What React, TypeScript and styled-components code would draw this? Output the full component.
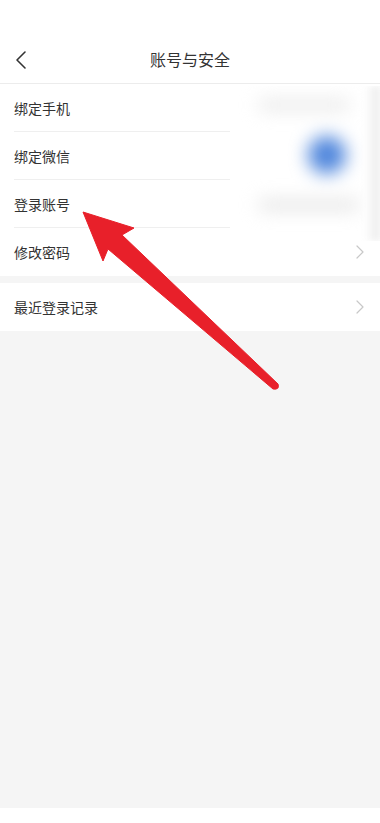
import { FC } from "react"
import styled, { createGlobalStyle } from "styled-components"

const GlobalStyle = createGlobalStyle`
  html, body {
    margin: 0;
    padding: 0;
    background: #fff;
  }
  * {
    box-sizing: border-box;
  }
`

const Chevron: FC = () => (
  <svg width="8" height="14" viewBox="0 0 8 14">
    <path d="M1 1 L7 7 L1 13" fill="none" stroke="#c8c8c8" strokeWidth="1.2" strokeLinecap="round" strokeLinejoin="round" />
  </svg>
)

const BackIcon: FC = () => (
  <svg width="14" height="20" viewBox="0 0 14 20">
    <path d="M11 2 L3 10 L11 18" fill="none" stroke="#333" strokeWidth="1.6" strokeLinecap="round" strokeLinejoin="round" />
  </svg>
)

const Arrow: FC = () => (
  <ArrowSvg width="380" height="823" viewBox="0 0 380 823">
    <path
      d="M83 212 L134 228 L122 235 L278 384 Q280 390 273 389 L108 249 L103 261 Z"
      fill="#e8202a"
      stroke="#e8202a"
      strokeWidth="1"
      strokeLinejoin="round"
    />
  </ArrowSvg>
)

const App: FC = () => {
  return (
    <>
      <GlobalStyle />
      <Page>
        <StatusSpace />
        <NavBar>
          <BackButton>
            <BackIcon />
          </BackButton>
          <Title>账号与安全</Title>
        </NavBar>
        <Group>
          <Row>
            <Label>绑定手机</Label>
          </Row>
          <Row>
            <Label>绑定微信</Label>
          </Row>
          <Row>
            <Label>登录账号</Label>
          </Row>
          <Row last>
            <Label>修改密码</Label>
            <Chevron />
          </Row>
        </Group>
        <Group>
          <Row last>
            <Label>最近登录记录</Label>
            <Chevron />
          </Row>
        </Group>
        <Filler />
        <BottomBar />
        <Blur>
          <BlurInner>
            <TextSmudge />
            <Avatar />
            <TextSmudge wide />
          </BlurInner>
          <EdgeShade />
        </Blur>
        <Arrow />
      </Page>
    </>
  )
}

const Page = styled.div`
  position: relative;
  width: 380px;
  height: 823px;
  display: flex;
  flex-direction: column;
  background: #f5f5f5;
  font-family: "Noto Sans CJK SC", "Noto Sans", sans-serif;
  overflow: hidden;
`

const StatusSpace = styled.div`
  height: 36px;
  background: #fff;
`

const NavBar = styled.div`
  position: relative;
  height: 48px;
  background: #fff;
  display: flex;
  align-items: center;
  justify-content: center;
  border-bottom: 1px solid #ececec;
`

const BackButton = styled.div`
  position: absolute;
  left: 14px;
  top: 14px;
  display: flex;
`

const Title = styled.div`
  font-size: 16px;
  color: #333;
  margin-top: -2px;
`

const Group = styled.div`
  background: #fff;
  margin-bottom: 7px;
  padding-left: 14px;
`

const Row = styled.div<{ last?: boolean }>`
  height: 48px;
  display: flex;
  align-items: center;
  justify-content: space-between;
  padding-right: 16px;
  border-bottom: ${({ last }) => (last ? "none" : "1px solid #efefef")};
`

const Label = styled.div`
  font-size: 14px;
  color: #333;
`

const Filler = styled.div`
  flex: 1;
`

const BottomBar = styled.div`
  height: 15px;
  background: #fff;
`

const Blur = styled.div`
  position: absolute;
  left: 230px;
  top: 86px;
  width: 150px;
  height: 155px;
  background: #fff;
  overflow: hidden;
`

const BlurInner = styled.div`
  display: flex;
  flex-direction: column;
  align-items: center;
  gap: 26px;
  padding: 14px 20px 0 28px;
  filter: blur(9px);
`

const TextSmudge = styled.div<{ wide?: boolean }>`
  align-self: stretch;
  height: 10px;
  margin-right: ${({ wide }) => (wide ? "0" : "10px")};
  background: ${({ wide }) => (wide ? "#e2e2e2" : "#e6e6e6")};
  border-radius: 5px;
`

const Avatar = styled.div`
  width: 38px;
  height: 38px;
  border-radius: 50%;
  margin-left: 36px;
  background: #4f86dc;
`

const EdgeShade = styled.div`
  position: absolute;
  right: 0;
  top: 0;
  width: 16px;
  height: 100%;
  background: linear-gradient(to right, #fff, #ebebeb);
  filter: blur(3px);
`

const ArrowSvg = styled.svg`
  position: absolute;
  left: 0;
  top: 0;
  pointer-events: none;
`

export default App
